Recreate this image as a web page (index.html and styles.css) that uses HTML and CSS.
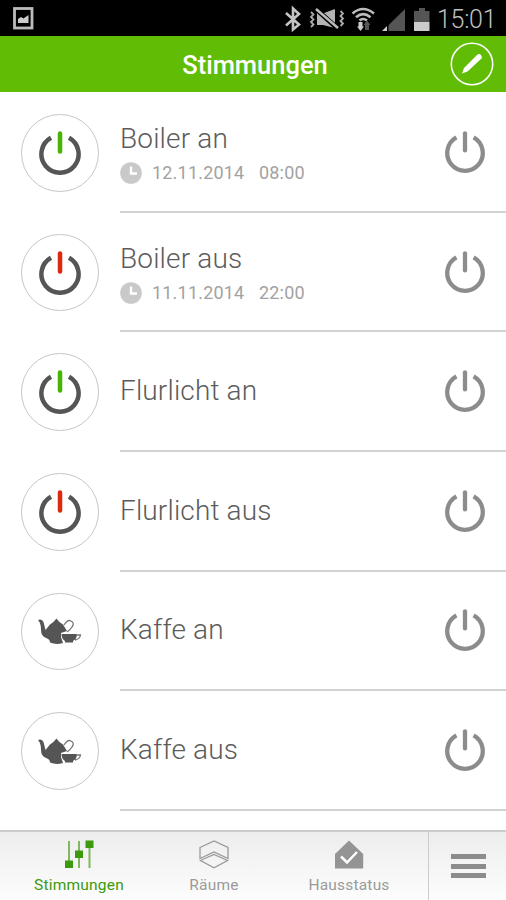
FILE: index.html
```html
<!DOCTYPE html>
<html lang="de">
<head>
    <meta charset="UTF-8">
    <meta name="viewport" content="width=device-width, initial-scale=1.0">
    <title>Stimmungen</title>
    <link rel="stylesheet" href="styles.css">
</head>
<body>

    <!-- Shared icons -->
    <svg class="icon-defs" width="0" height="0">
        <symbol id="icon-power" viewBox="0 0 44 46">
            <path class="ring" d="M13 7.800A18.600 18.600 0 1 0 31 7.800"/>
            <path class="stem" d="M22 3.400V21.400"/>
        </symbol>
        <symbol id="icon-tea" viewBox="0 0 44 26">
            <path fill="#555" d="M0 2Q3.500 0.500 5.500 4L7.500 12L12 6.500Q15.500 4.500 18.500 0.500Q21 4.500 25 6.500L29 13L23 15V19L25 25Q18 27 12 24.500Q12 21 8 20Q3 18 3 12Q3 5 0 2Z"/>
            <path fill="none" stroke="#777" stroke-width="1.300" d="M26 7Q30 1 33 3Q37 5 34 9Q32 12 29 14"/>
            <path fill="#555" d="M23.500 16H39Q39 21 35 23V24.500H27V23Q23.500 21 23.500 16Z"/>
            <path fill="none" stroke="#777" stroke-width="1.300" d="M38 17H42.500Q42 21 37 22"/>
        </symbol>
        <symbol id="icon-clock" viewBox="0 0 22 22">
            <circle cx="11" cy="11" r="10.800" fill="#c9c9c9"/>
            <path fill="none" stroke="#fff" stroke-width="2.400" d="M11 4.500V11.500H17"/>
        </symbol>
    </svg>

    <div class="status-bar">
        <svg class="status-picture" width="21" height="23" viewBox="0 0 21 23">
            <rect x="1.500" y="1.500" width="17.500" height="19.500" fill="none" stroke="#bbb" stroke-width="2.800"/>
            <path fill="#ccc" d="M5 16V12L8 10L10.500 11.500L15.500 8V16Z"/>
        </svg>
        <svg class="status-icons" width="148" height="28" viewBox="0 0 148 28">
            <!-- bluetooth -->
            <path fill="none" stroke="#c4c4c4" stroke-width="2.600" d="M1 8L14 19.500L8 24.500V3.500L14 9L1 20.500"/>
            <!-- vibrate, muted -->
            <path fill="none" stroke="#aaa" stroke-width="1.800" d="M26 7L28.500 9.500L26 12L28.500 14.500L26 17L28.500 19.500L26 22M55.500 6L58 8.500L55.500 11L58 13.500L55.500 16L58 18.500L55.500 21"/>
            <path fill="#b4b4b4" d="M32 8H39L50 4V23L38 20H32Z"/>
            <path fill="none" stroke="#000" stroke-width="5" d="M31 4L52 23"/>
            <path fill="none" stroke="#bbb" stroke-width="2.500" d="M31 4L53 23"/>
            <!-- wifi -->
            <path fill="none" stroke="#bbb" stroke-width="2.600" d="M67.500 8.500Q78 -0.500 89 8.500M71 12.200Q78 6 85.500 12.200M74.500 15.500Q78 12.500 82 15.500"/>
            <path fill="#ccc" d="M73.500 17H77.500V21.500H79L75.500 26L72 21.500H73.500Z"/>
            <path fill="#555" d="M80 25V20H78.500L82 15.500L85.500 20H84V25Z"/>
            <!-- signal -->
            <path fill="#555" d="M120 4V26H97.500Z"/>
            <path fill="#000" d="M101 18H103.500V27H101Z"/>
            <path fill="#ccc" d="M97 26L102 21V26Z"/>
            <!-- battery -->
            <path fill="#555" d="M129 6H134V3H140V6H144.500V17H129Z"/>
            <rect x="129" y="17" width="15.500" height="9" fill="#ccc"/>
        </svg>
        <span class="status-time">15:01</span>
    </div>

    <header class="header">
        <h1 class="title">Stimmungen</h1>
        <svg class="edit-button" width="44" height="44" viewBox="0 0 44 44">
            <circle cx="22" cy="22" r="20.700" fill="none" stroke="#fff" stroke-width="1.500"/>
            <path fill="#fff" d="M12 31.500L14 26L27.500 12.500Q29.500 11.500 31 13Q32.500 15 31.500 16.500L17.500 29.500Z"/>
        </svg>
    </header>

    <main class="list">
        <div class="row">
            <div class="badge on"><svg class="power"><use href="#icon-power"/></svg></div>
            <div class="content">
                <div class="text with-meta">
                    <div class="name">Boiler an</div>
                    <div class="meta"><svg class="clock"><use href="#icon-clock"/></svg><span class="date">12.11.2014</span><span>08:00</span></div>
                </div>
                <svg class="toggle"><use href="#icon-power"/></svg>
            </div>
        </div>
        <div class="row">
            <div class="badge off"><svg class="power"><use href="#icon-power"/></svg></div>
            <div class="content">
                <div class="text with-meta">
                    <div class="name">Boiler aus</div>
                    <div class="meta"><svg class="clock"><use href="#icon-clock"/></svg><span class="date">11.11.2014</span><span>22:00</span></div>
                </div>
                <svg class="toggle"><use href="#icon-power"/></svg>
            </div>
        </div>
        <div class="row">
            <div class="badge on"><svg class="power"><use href="#icon-power"/></svg></div>
            <div class="content">
                <div class="text"><div class="name">Flurlicht an</div></div>
                <svg class="toggle"><use href="#icon-power"/></svg>
            </div>
        </div>
        <div class="row">
            <div class="badge off"><svg class="power"><use href="#icon-power"/></svg></div>
            <div class="content">
                <div class="text"><div class="name">Flurlicht aus</div></div>
                <svg class="toggle"><use href="#icon-power"/></svg>
            </div>
        </div>
        <div class="row">
            <div class="badge"><svg class="tea"><use href="#icon-tea"/></svg></div>
            <div class="content">
                <div class="text"><div class="name">Kaffe an</div></div>
                <svg class="toggle"><use href="#icon-power"/></svg>
            </div>
        </div>
        <div class="row">
            <div class="badge"><svg class="tea"><use href="#icon-tea"/></svg></div>
            <div class="content">
                <div class="text"><div class="name">Kaffe aus</div></div>
                <svg class="toggle"><use href="#icon-power"/></svg>
            </div>
        </div>
    </main>

    <nav class="tabs">
        <div class="tab tab-moods active">
            <svg width="30" height="30" viewBox="0 0 30 30">
                <path stroke="#7fb860" stroke-width="2" d="M5 1V28M15 1V28M25.500 1V28"/>
                <path fill="#3c9a0c" d="M1 20.500H9V28H1ZM11 10.500H19V18H11ZM21.500 0.500H29.500V8H21.500Z"/>
            </svg>
            <span>Stimmungen</span>
        </div>
        <div class="tab tab-rooms">
            <svg width="30" height="30" viewBox="0 0 30 30">
                <path fill="none" stroke="#999" stroke-width="1.300" d="M1 7.500L15 1L29 7.500V18.500L15 12L1 18.500ZM1.500 20.500L15 14.500L28.500 20.500L15 27.800Z"/>
            </svg>
            <span>Räume</span>
        </div>
        <div class="tab tab-house">
            <svg width="30" height="30" viewBox="0 0 30 30">
                <path fill="#949494" d="M15 0.500L29.200 14V28.500H1V14Z"/>
                <path fill="none" stroke="#fff" stroke-width="2.500" d="M7 16.500L13 22.500L23 12"/>
            </svg>
            <span>Hausstatus</span>
        </div>
        <div class="menu">
            <i></i>
            <i></i>
            <i></i>
        </div>
    </nav>

</body>
</html>
```

FILE: styles.css
```css
* {
    box-sizing: border-box;
}

body {
    font-family: Roboto, sans-serif;
    background-color: #fff;
    margin: 0;
    height: 900px;
    display: flex;
    flex-direction: column;
    overflow: hidden;
}

svg {
    display: block;
    flex: none;
}

.icon-defs {
    position: absolute;
}

/* Status bar */
.status-bar {
    height: 35.5px;
    flex: none;
    background-color: #000;
    display: flex;
    align-items: center;
    padding: 2px 9px 0 13px;
}

.status-icons {
    margin-left: auto;
}

.status-time {
    width: 60px;
    margin-left: 4px;
    padding-top: 2px;
    color: #c0c0c0;
    font-size: 25px;
    font-weight: 300;
    line-height: 28px;
    letter-spacing: -0.3px;
    white-space: nowrap;
}

/* Header */
.header {
    height: 56.5px;
    flex: none;
    background-color: #61bc05;
    display: grid;
    grid-template-columns: 1fr auto 1fr;
    align-items: center;
    padding: 0 12px 0 16px;
}

.title {
    grid-column: 2;
    margin: 3px 0 0;
    color: #fff;
    font-size: 25.5px;
    font-weight: 500;
    line-height: 30px;
}

.edit-button {
    justify-self: end;
}

/* List */
.list {
    flex: 1;
    padding-top: 1.2px;
}

.row {
    height: 119.6px;
    display: flex;
    align-items: center;
    padding-left: 21.4px;
}

.badge {
    width: 77.6px;
    height: 77.6px;
    flex: none;
    border: 1.5px solid #c6c6c6;
    border-radius: 50%;
    display: flex;
    align-items: center;
    justify-content: center;
    --ring: #555;
}

.power {
    width: 44px;
    height: 46px;
}

.ring,
.stem {
    fill: none;
    stroke-width: 4.5;
}

.ring {
    stroke: var(--ring);
}

.on {
    color: #46b400;
}

.off {
    color: #e02810;
}

.stem {
    stroke: currentColor;
    stroke-linecap: round;
}

.tea {
    width: 44px;
    height: 26px;
}

.content {
    flex: 1;
    height: 100%;
    margin-left: 21px;
    padding-right: 20.5px;
    border-bottom: 2px solid #d2d2d2;
    display: flex;
    align-items: center;
    justify-content: space-between;
}

.with-meta {
    padding-top: 6px;
}

.name {
    color: #5c5c5c;
    font-size: 28px;
    font-weight: 300;
    line-height: 34px;
    letter-spacing: 0.15px;
}

.meta {
    display: flex;
    align-items: center;
    height: 30px;
    margin-top: 2px;
    color: #a2a2a2;
    font-size: 18px;
    letter-spacing: 0.2px;
}

.clock {
    width: 22px;
    height: 22px;
    margin-right: 10px;
}

.date {
    width: 107px;
}

.toggle {
    width: 42px;
    height: 44px;
    color: #8c8c8c;
    --ring: #8c8c8c;
}

/* Tabs */
.tabs {
    height: 70px;
    flex: none;
    display: flex;
    border-top: 2px solid #ccc;
    background: linear-gradient(#ededed, #fdfdfd);
}

.tab {
    padding-top: 8px;
    display: flex;
    flex-direction: column;
    align-items: center;
    color: #9a9a9a;
    font-size: 15.5px;
    line-height: 20px;
    letter-spacing: 0.2px;
}

.tab span {
    margin-top: 5px;
}

.active {
    color: #3c9a0c;
}

.tab-moods {
    width: 158px;
}

.tab-rooms {
    width: 112px;
}

.tab-house {
    width: 158px;
}

.menu {
    flex: 1;
    border-left: 1.5px solid #ccc;
    padding: 22px 20px 0 22px;
}

.menu i {
    display: block;
    height: 5px;
    margin-bottom: 4.5px;
    background-color: #8c8c8c;
}
```
